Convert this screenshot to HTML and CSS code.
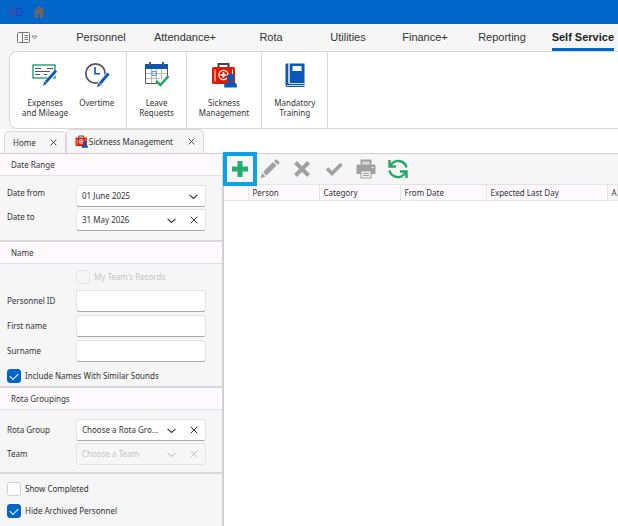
FILE: index.html
```html
<!DOCTYPE html>
<html lang="en">
<head>
    <meta charset="UTF-8">
    <meta name="viewport" content="width=device-width, initial-scale=1.0">
    <title>Sickness Management</title>
    <link rel="stylesheet" href="styles.css">
</head>
<body>

<!-- shared icons -->
<svg class="sprite" width="0" height="0" aria-hidden="true">
    <symbol id="chevron" viewBox="0 0 8 8"><path d="M.5 2.5L4 5.7L7.5 2.5" fill="none" stroke="currentColor"/></symbol>
    <symbol id="cross" viewBox="0 0 8 8"><path d="M.7 .7L7.3 7.3M7.3 .7L.7 7.3" fill="none" stroke="currentColor"/></symbol>
    <symbol id="medkit" viewBox="0 0 26 26">
        <path d="M7.500 5V2H17.500V5" fill="none" stroke="#444" stroke-width="2"/>
        <rect x="1" y="5" width="23" height="17" rx="1.5" fill="#de1a00"/>
        <path d="M4 7.500V19.500M21.500 7.500V12" stroke="#fff" stroke-width="1"/>
        <circle cx="12.500" cy="13" r="4.600" fill="none" stroke="#fff" stroke-width="1.3"/>
        <path d="M12.500 10V16M9.500 13H15.500" stroke="#fff" stroke-width="1.6"/>
        <path d="M19.500 12C22.300 12 23.200 13.800 23 15.700C22.800 17.300 22 18.200 21.300 19.200V20L24.500 21Q25.800 21.600 25.800 23V25.500H13.200V23Q13.200 21.600 14.500 21L17.700 20V19.200C17 18.200 16.200 17.300 16 15.700C15.800 13.800 16.700 12 19.500 12Z" fill="#0b57b5"/>
    </symbol>
</svg>

<header class="titlebar">
    <svg width="14" height="12" viewBox="0 0 14 12" fill="none">
        <path d="M6.500 9.500H1.500V2.500H5.500V7L3.500 8.500" stroke="#6a3a90"/>
        <path d="M7.500 2.500H13V9.500H7.500Z" stroke="#3c30d8"/>
    </svg>
    <svg width="12" height="14" viewBox="0 0 12 14" fill="#6b6560">
        <path d="M6 1L0 7.200L1 8L2 7.200V13H5V9H7V13H10V7.200L11 8L12 7.200L10 5V2H8.400V3.400Z"/>
    </svg>
</header>

<nav class="menu">
    <button class="layout-button" aria-label="Layout">
        <svg width="21" height="11" viewBox="0 0 21 11" fill="none" stroke="#777">
            <rect x=".5" y=".5" width="12" height="10" rx="1"/>
            <path d="M5.500 1V10M7.500 3.500H11M7.500 5.500H11M7.500 7.500H11"/>
            <path d="M15 4H20L17.500 7Z" stroke-width=".8"/>
        </svg>
    </button>
    <a href="#">Personnel</a>
    <a href="#">Attendance+</a>
    <a href="#">Rota</a>
    <a href="#">Utilities</a>
    <a href="#">Finance+</a>
    <a href="#">Reporting</a>
    <a href="#" class="active">Self Service</a>
</nav>

<div class="ribbon-bar">
    <section class="ribbon">
        <div class="ribbon-group">
            <button>
                <svg width="26" height="26" viewBox="0 0 26 26" fill="none">
                    <rect x="1" y="3" width="22" height="13" fill="#fff" stroke="#1fa06a" stroke-width="1.4"/>
                    <path d="M3 6.500H9M15 6.500H21M3 9.500H18M3 12.500H8M12 12.500H15" stroke="#555"/>
                    <path d="M24.500 9L14 20.500" stroke="#fff" stroke-width="4.4"/>
                    <path d="M24 8.600L14 20" stroke="#0b57b5" stroke-width="2.8"/>
                    <path d="M11 24L12.400 19.200L15 21.400Z" fill="#0b57b5"/>
                </svg>
                <span>Expenses<br>and Mileage</span>
            </button>
            <button>
                <svg width="26" height="26" viewBox="0 0 26 26" fill="none">
                    <circle cx="11.500" cy="11.500" r="9.700" stroke="#555" stroke-width="1.7"/>
                    <path d="M11 5V11.700H16" stroke="#0b57b5" stroke-width="1.6"/>
                    <path d="M25 11L15.500 22" stroke="#fff" stroke-width="4.4"/>
                    <path d="M24.500 11.500L16 21.500" stroke="#0b57b5" stroke-width="2.8"/>
                    <path d="M13 25.500L14.400 20.700L17 22.900Z" fill="#0b57b5"/>
                </svg>
                <span>Overtime</span>
            </button>
        </div>
        <div class="ribbon-group">
            <button>
                <svg width="26" height="26" viewBox="0 0 26 26" fill="none">
                    <path d="M1.500 5V21.500H13M23.500 5V15" stroke="#555"/>
                    <rect x="1" y="2" width="23" height="5" fill="#0b57b5"/>
                    <path d="M6 0V4M19 0V4" stroke="#555" stroke-width="2"/>
                    <path d="M2 11.500H23M2 16.500H16M7.500 7V21M12.500 7V21M17.500 7V17" stroke="#aaa" stroke-width=".8"/>
                    <rect x="8" y="9.500" width="4" height="4" stroke="#5b9be0"/>
                    <path d="M12 19L16.500 23L24.500 14" stroke="#1fa868" stroke-width="2.6"/>
                </svg>
                <span>Leave<br>Requests</span>
            </button>
        </div>
        <div class="ribbon-group">
            <button>
                <svg width="26" height="26"><use href="#medkit"/></svg>
                <span>Sickness<br>Management</span>
            </button>
        </div>
        <div class="ribbon-group">
            <button>
                <svg width="26" height="26" viewBox="0 0 26 26">
                    <path d="M4.500 1.500H6.500V21H22.500V25H5.500Q3.500 25 3.500 22V2.500Q3.500 1.500 4.500 1.500Z" fill="#0b57b5"/>
                    <rect x="7.500" y="1.500" width="15" height="20" fill="#0b57b5"/>
                    <path d="M7 1.500V21.500H22.500M5 23.500H22.500" fill="none" stroke="#fff" stroke-width=".8"/>
                    <rect x="10.500" y="4" width="9" height="5" fill="#fff"/>
                </svg>
                <span>Mandatory<br>Training</span>
            </button>
        </div>
    </section>
</div>

<div class="tabs">
    <div class="tab">
        <a href="#">Home</a>
        <button aria-label="Close Home"><svg width="7" height="7"><use href="#cross"/></svg></button>
    </div>
    <div class="tab current">
        <svg width="13" height="13"><use href="#medkit"/></svg>
        <a href="#">Sickness Management</a>
        <button aria-label="Close Sickness Management"><svg width="7" height="7"><use href="#cross"/></svg></button>
    </div>
</div>

<div class="workspace">
    <form class="filters">
        <section class="panel">
            <h2>Date Range</h2>
            <div class="panel-body dates">
                <div class="row">
                    <label for="dateFrom">Date from</label>
                    <div class="combo">
                        <select id="dateFrom"><option>01 June 2025</option></select>
                        <svg width="9" height="9"><use href="#chevron"/></svg>
                    </div>
                </div>
                <div class="row">
                    <label for="dateTo">Date to</label>
                    <div class="combo">
                        <select id="dateTo"><option>31 May 2026</option></select>
                        <svg width="9" height="9"><use href="#chevron"/></svg>
                        <button type="button" aria-label="Clear"><svg width="8" height="8"><use href="#cross"/></svg></button>
                    </div>
                </div>
            </div>
        </section>

        <section class="panel">
            <h2>Name</h2>
            <div class="panel-body names">
                <label class="check indented disabled"><input type="checkbox" disabled> My Team's Records</label>
                <div class="row">
                    <label for="personnelId">Personnel ID</label>
                    <input type="text" id="personnelId">
                </div>
                <div class="row">
                    <label for="firstName">First name</label>
                    <input type="text" id="firstName">
                </div>
                <div class="row">
                    <label for="surname">Surname</label>
                    <input type="text" id="surname">
                </div>
                <label class="check"><input type="checkbox" checked> Include Names With Similar Sounds</label>
            </div>
        </section>

        <section class="panel">
            <h2>Rota Groupings</h2>
            <div class="panel-body">
                <div class="row">
                    <label for="rotaGroup">Rota Group</label>
                    <div class="combo">
                        <select id="rotaGroup"><option>Choose a Rota Gro...</option></select>
                        <svg width="9" height="9"><use href="#chevron"/></svg>
                        <button type="button" aria-label="Clear"><svg width="8" height="8"><use href="#cross"/></svg></button>
                    </div>
                </div>
                <div class="row">
                    <label for="team">Team</label>
                    <div class="combo disabled">
                        <select id="team" disabled><option>Choose a Team</option></select>
                        <svg width="9" height="9"><use href="#chevron"/></svg>
                        <button type="button" aria-label="Clear" disabled><svg width="8" height="8"><use href="#cross"/></svg></button>
                    </div>
                </div>
            </div>
        </section>

        <div class="options">
            <label class="check"><input type="checkbox"> Show Completed</label>
            <label class="check"><input type="checkbox" checked> Hide Archived Personnel</label>
        </div>
    </form>

    <main>
        <div class="toolbar">
            <button class="highlight" aria-label="Add">
                <svg width="18" height="18" viewBox="0 0 18 18"><path d="M9 1V17M1 9H17" stroke="#26ab71" stroke-width="5"/></svg>
            </button>
            <button aria-label="Edit">
                <svg width="20" height="20" viewBox="0 0 20 20" fill="#a0a0a0"><path d="M.5 19.500L2 14L5.500 17.500ZM3 13L13 3L16.500 6.500L6.500 16.500ZM14 2L15.500 .7Q16.300 0 17 .7L19.300 3Q20 3.700 19.300 4.500L17.500 5.700Z"/></svg>
            </button>
            <button aria-label="Delete">
                <svg width="18" height="18" viewBox="0 0 18 18"><path d="M2.500 2.500L15.500 15.500M15.500 2.500L2.500 15.500" stroke="#a0a0a0" stroke-width="4"/></svg>
            </button>
            <button aria-label="Confirm">
                <svg width="18" height="18" viewBox="0 0 18 18"><path d="M2 8.500L7 13.500L16.500 4" fill="none" stroke="#a0a0a0" stroke-width="3.6"/></svg>
            </button>
            <button aria-label="Print">
                <svg width="20" height="20" viewBox="0 0 20 20">
                    <path d="M5.500 5.500V1.500H14.500V5.500" fill="#d8d8d8" stroke="#a0a0a0" stroke-width="2"/>
                    <path d="M2 5.500H18Q19.500 5.500 19.500 7V15H.5V7Q.5 5.500 2 5.500Z" fill="#a0a0a0"/>
                    <rect x="5" y="12" width="10" height="7" fill="#f2f2f2" stroke="#a0a0a0"/>
                    <path d="M7 14.500H13M7 16.500H13" stroke="#a0a0a0"/>
                    <path d="M15.500 8.500H17.500" stroke="#eee"/>
                </svg>
            </button>
            <button aria-label="Refresh">
                <svg width="20" height="20" viewBox="0 0 20 20" fill="none" stroke="#1fa868" stroke-width="2.4">
                    <path d="M18.500 8.500A8.600 8.600 0 0 0 4 4.500L2.500 6.500M1.500 11.500A8.600 8.600 0 0 0 16 15.500L17.500 13.500"/>
                    <path d="M1.500 1V7.500H8M18.500 19V12.500H12"/>
                </svg>
            </button>
        </div>
        <table class="records">
            <colgroup>
                <col class="c-mark"><col class="c-person"><col class="c-category"><col class="c-from"><col class="c-last"><col>
            </colgroup>
            <thead>
                <tr>
                    <th></th>
                    <th>Person</th>
                    <th>Category</th>
                    <th>From Date</th>
                    <th>Expected Last Day</th>
                    <th>A</th>
                </tr>
            </thead>
        </table>
    </main>
</div>

</body>
</html>
```
FILE: styles.css
```css
* {
    box-sizing: border-box;
}
body {
    margin: 0;
    min-height: 100vh;
    display: flex;
    flex-direction: column;
    overflow-x: hidden;
    background: #fff;
    color: #333;
    font-family: "Noto Sans", sans-serif;
    font-size: 8px;
    line-height: 10px;
}
button, input, select {
    font: inherit;
    color: inherit;
    margin: 0;
    padding: 0;
    border: 0;
    background: none;
}
a {
    color: inherit;
    text-decoration: none;
}
svg {
    display: block;
    flex: none;
}
.sprite {
    position: absolute;
}

/* title bar and menu */
.titlebar {
    display: flex;
    align-items: center;
    gap: 10px;
    height: 24px;
    padding-left: 9px;
    background: #0066c9;
}
.menu {
    display: grid;
    grid-template-columns: 63fr 76fr 92fr 80fr 74fr 80fr 74fr 79fr;
    grid-template-rows: 27px;
    background: #f6f6f6;
    font-family: "Liberation Sans", Arial, sans-serif;
    font-size: 11px;
    line-height: 27px;
    text-align: center;
}
.layout-button {
    padding-left: 17px;
}
.menu .active {
    justify-self: end;
    margin-right: 4px;
    font-weight: bold;
    color: #222;
    border-bottom: 3px solid #0066c9;
}

/* ribbon */
.ribbon-bar {
    padding-left: 9px;
    background: #f6f6f6;
}
.ribbon {
    display: flex;
    height: 78px;
    border: 1px solid #d8d8d8;
    border-right: 0;
    border-radius: 8px 0 0 8px;
    background: #fff;
}
.ribbon-group {
    display: flex;
    gap: 11px;
    padding: 10px 12px 0;
    border-right: 1px solid #d8d8d8;
}
.ribbon-group button {
    display: flex;
    flex-direction: column;
    align-items: center;
    gap: 10px;
}

/* document tabs */
.tabs {
    display: flex;
    align-items: flex-end;
    height: 25px;
    padding-left: 4px;
    border-bottom: 1px solid #d0d0d0;
}
.tab {
    display: flex;
    align-items: center;
    height: 22px;
    padding: 0 8px;
    border: 1px solid #d8d8d8;
    border-bottom: 0;
    border-radius: 5px 5px 0 0;
    background: #f6f6f6;
}
.tab.current {
    height: 24px;
    gap: 1px;
}
.tab button {
    margin-left: 14px;
}

/* filters */
.workspace {
    display: flex;
    flex: 1;
}
.filters {
    flex: none;
    width: 224px;
    background: #f6f6f6;
    border-right: 2px solid #d0d0d0;
}
.panel {
    border-bottom: 2px solid #d8d8d8;
}
.panel h2 {
    margin: 0;
    padding-left: 11px;
    font-size: 8px;
    font-weight: normal;
    line-height: 21px;
    background: #fdf9fd;
    border-bottom: 1px solid #e0e0e0;
}
.panel-body {
    display: grid;
    gap: 2px;
    padding: 9px 16px 7px 7px;
}
.panel-body.names {
    gap: 3px;
    padding-top: 6px;
    padding-bottom: 3px;
}
.row {
    display: grid;
    grid-template-columns: 69px minmax(0, 1fr);
    align-items: center;
}
.panel-body.dates {
    padding-bottom: 9px;
}
.dates label {
    padding-bottom: 6px;
}
.combo, input[type="text"] {
    display: flex;
    align-items: center;
    width: 100%;
    height: 22px;
    background: #fff;
    border: 1px solid #e4e4e4;
    border-bottom-color: #aaa;
    border-radius: 3px;
}
.combo select {
    flex: 1;
    min-width: 0;
    padding-left: 5px;
    appearance: none;
    opacity: 1;
}
.combo svg {
    margin: 0 7px;
}
.combo.disabled, .check.disabled {
    color: #c4c4c4;
}
.combo.disabled {
    background: none;
    border-bottom-color: #e4e4e4;
}
.check {
    display: flex;
    align-items: center;
    gap: 4px;
}
.names .check {
    padding: 4px 0 0;
}
.names .check.indented {
    padding: 0 0 3px 69px;
}
.check input {
    appearance: none;
    width: 14px;
    height: 14px;
    background: #fff;
    border: 1px solid #d0d0d0;
    border-radius: 3px;
}
.check.disabled input {
    background: none;
    border-color: #e4e4e4;
}
.check input:checked {
    background: #0066c9;
    border-color: #0066c9;
}
.check input:checked::before {
    content: "";
    display: block;
    width: 7px;
    height: 4px;
    margin: 3px 2px;
    border: solid #fff;
    border-width: 0 0 1px 1px;
    transform: rotate(-45deg);
}
.options {
    display: grid;
    gap: 8px;
    padding: 8px 7px;
}

/* records */
main {
    flex: 1;
    min-width: 0;
}
.toolbar {
    display: flex;
    align-items: center;
    height: 30px;
    background: #f6f6f6;
}
.toolbar button {
    display: flex;
    justify-content: center;
    width: 32px;
}
.toolbar .highlight {
    align-items: center;
    width: 34px;
    height: 34px;
    margin: 0 -3px 0 -1px;
    border: 4px solid #0aa2e8;
}
.records {
    width: 100%;
    table-layout: fixed;
    border-collapse: collapse;
    background: #fdf9fd;
}
.records th {
    height: 16px;
    padding: 0 0 0 4px;
    border: 1px solid #e4e4e4;
    border-left: 0;
    font-weight: normal;
    text-align: left;
}
.c-mark {
    width: 24px;
}
.c-person {
    width: 71px;
}
.c-category {
    width: 81px;
}
.c-from {
    width: 86px;
}
.c-last {
    width: 121px;
}
```
